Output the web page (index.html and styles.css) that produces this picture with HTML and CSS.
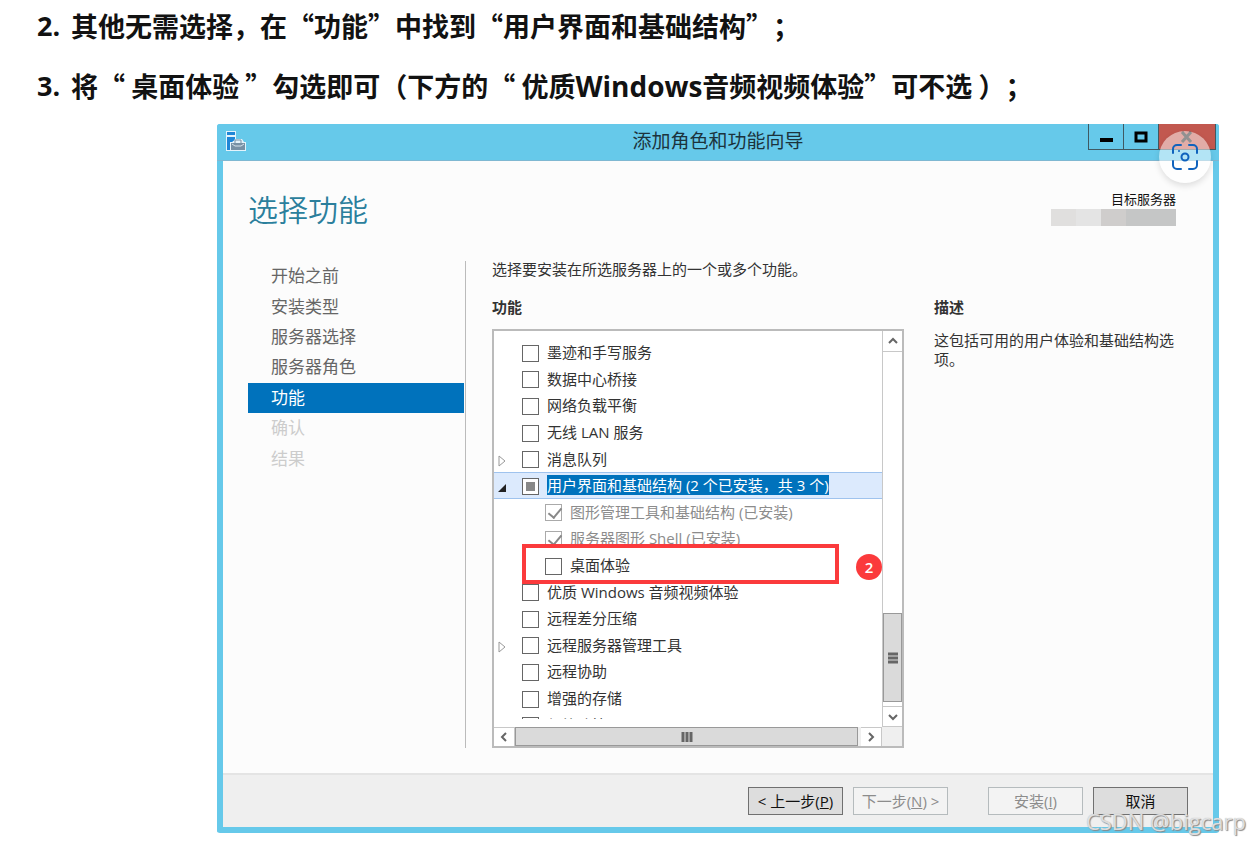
FILE: index.html
```html
<!DOCTYPE html>
<html lang="zh-CN">
<head>
    <meta charset="UTF-8">
    <meta name="viewport" content="width=device-width, initial-scale=1.0">
    <title>添加角色和功能向导</title>
    <link rel="stylesheet" href="styles.css">
</head>
<body>
<main class="article">
    <!-- 步骤说明 -->
    <h2 class="step"><span class="num">2.</span>其他无需选择，在“功能”中找到“用户界面和基础结构”；</h2>
    <h2 class="step"><span class="num">3.</span>将“ 桌面体验 ”勾选即可（下方的“ 优质<span class="en">Windows</span>音频视频体验”可不选 ）；</h2>

    <!-- 向导窗口 -->
    <section class="window">
        <header class="titlebar">
            <svg class="app-icon" width="22" height="22" viewBox="0 0 22 22">
                <path d="M1 1h10v8h6l2 3h2v9H1z" fill="#e4f3fb"/>
                <path d="M2 2h8v3H2zM2 7h8v3L7 12H5v8H2z" fill="#1f86d6"/>
                <path d="M5 12h3l2-3h6l2 3h3v9H5z" fill="#e4f3fb"/>
                <path d="M6 13h14v7H6z" fill="#7891a5"/>
                <path d="M10 13v-3h6v3" fill="none" stroke="#7891a5"/>
                <path d="M7 14l3 2h6l3-2" fill="none" stroke="#d5e3ec"/>
            </svg>
            <span class="title">添加角色和功能向导</span>
            <div class="controls">
                <button class="ctl min" aria-label="最小化"><svg width="14" height="14"><path d="M1 8h13v4H1z"/></svg></button>
                <button class="ctl max" aria-label="最大化"><svg width="14" height="14"><path d="M2 3h10v8H2z" fill="none" stroke="#000" stroke-width="3"/></svg></button>
                <button class="ctl close" aria-label="关闭"><svg width="14" height="14"><path d="M2 2l9 10M11 2l-9 10" stroke="#222" stroke-width="3"/></svg></button>
            </div>
            <button class="lens" aria-label="图像搜索">
                <svg width="28" height="28" viewBox="0 0 28 28" fill="none" stroke="#0f62bd" stroke-width="2" stroke-linecap="round">
                    <path d="M2 10V6a4 4 0 0 1 4-4h4M18 2h4a4 4 0 0 1 4 4v4M26 18v4a4 4 0 0 1-4 4h-4M10 26H6a4 4 0 0 1-4-4v-4"/>
                    <circle cx="14" cy="14" r="3.500"/>
                    <circle cx="8" cy="8" r="1" fill="#0f62bd" stroke="none"/>
                </svg>
            </button>
        </header>

        <div class="head">
            <h1>选择功能</h1>
            <div class="server">
                <span>目标服务器</span>
                <div class="mosaic"><i></i><i></i><i></i><i></i><i></i></div>
            </div>
        </div>

        <div class="content">
            <nav class="nav">
                <a href="#">开始之前</a>
                <a href="#">安装类型</a>
                <a href="#">服务器选择</a>
                <a href="#">服务器角色</a>
                <a href="#" class="active">功能</a>
                <a class="off">确认</a>
                <a class="off">结果</a>
            </nav>

            <div class="features">
                <p class="tip">选择要安装在所选服务器上的一个或多个功能。</p>
                <h3>功能</h3>
                <div class="listbox">
                    <div class="view">
                        <ul class="tree">
                            <li><span class="arrow"></span><label><input type="checkbox"><span>墨迹和手写服务</span></label></li>
                            <li><span class="arrow"></span><label><input type="checkbox"><span>数据中心桥接</span></label></li>
                            <li><span class="arrow"></span><label><input type="checkbox"><span>网络负载平衡</span></label></li>
                            <li><span class="arrow"></span><label><input type="checkbox"><span>无线 LAN 服务</span></label></li>
                            <li><span class="arrow"><svg width="9" height="14"><path d="M1 2l6 5-6 5z" fill="#fff" stroke="#999"/></svg></span><label><input type="checkbox"><span>消息队列</span></label></li>
                            <li class="selected"><span class="arrow"><svg width="9" height="14"><path d="M8 4v8H0z" fill="#222"/></svg></span><label><input type="checkbox" class="partial"><span>用户界面和基础结构 (2 个已安装，共 3 个)</span></label></li>
                            <li class="child"><label><input type="checkbox" checked disabled><span>图形管理工具和基础结构 (已安装)</span></label></li>
                            <li class="child"><label><input type="checkbox" checked disabled><span>服务器图形 Shell (已安装)</span></label></li>
                            <li class="child"><label><input type="checkbox"><span>桌面体验</span></label><b class="frame"></b><b class="badge">2</b></li>
                            <li><span class="arrow"></span><label><input type="checkbox"><span>优质 Windows 音频视频体验</span></label></li>
                            <li><span class="arrow"></span><label><input type="checkbox"><span>远程差分压缩</span></label></li>
                            <li><span class="arrow"><svg width="9" height="14"><path d="M1 2l6 5-6 5z" fill="#fff" stroke="#999"/></svg></span><label><input type="checkbox"><span>远程服务器管理工具</span></label></li>
                            <li><span class="arrow"></span><label><input type="checkbox"><span>远程协助</span></label></li>
                            <li><span class="arrow"></span><label><input type="checkbox"><span>增强的存储</span></label></li>
                            <li><span class="arrow"></span><label><input type="checkbox"><span>组策略管理</span></label></li>
                        </ul>
                    </div>
                    <div class="vbar">
                        <button aria-label="向上"><svg width="12" height="12"><path d="M2 8l4-4 4 4"/></svg></button>
                        <div class="thumb"><svg width="10" height="12"><path d="M0 2h10M0 6h10M0 10h10"/></svg></div>
                        <button aria-label="向下"><svg width="12" height="12"><path d="M2 4l4 4 4-4"/></svg></button>
                    </div>
                    <div class="hbar">
                        <button aria-label="向左"><svg width="12" height="12"><path d="M8 2L4 6l4 4"/></svg></button>
                        <div class="thumb"><svg width="12" height="10"><path d="M2 0v10M6 0v10M10 0v10"/></svg></div>
                        <button aria-label="向右"><svg width="12" height="12"><path d="M4 2l4 4-4 4"/></svg></button>
                    </div>
                </div>
            </div>

            <aside class="desc">
                <h3>描述</h3>
                <p>这包括可用的用户体验和基础结构选项。</p>
            </aside>
        </div>

        <footer class="buttons">
            <button class="btn">&lt; 上一步(<u>P</u>)</button>
            <button class="btn" disabled>下一步(<u>N</u>) &gt;</button>
            <button class="btn install" disabled>安装(<u>I</u>)</button>
            <button class="btn">取消</button>
        </footer>
    </section>
    <span class="watermark">CSDN @bigcarp</span>
</main>
</body>
</html>
```
FILE: styles.css
```css
* {
    box-sizing: border-box;
}
body {
    margin: 0;
    background: #fff;
    color: #333;
    font: 15px/20px "Open Sans", "Noto Sans CJK SC", sans-serif;
}
h1, h2, h3, p, ul {
    margin: 0;
    padding: 0;
}
button {
    padding: 0;
    font: inherit;
    color: inherit;
}
.article {
    position: relative;
    padding: 0 30px 7px 37px;
}

/* 步骤标题 */
.step {
    display: flex;
    height: 60px;
    padding-top: 6px;
    color: #121212;
    font: bold 27px/40px "Noto Sans CJK SC", sans-serif;
    text-spacing-trim: space-all;
    white-space: pre;
}
.num, .en {
    font-family: "Open Sans", sans-serif;
}
.num {
    width: 34px;
}
.en {
    font-size: 28px;
}

/* 窗口 */
.window {
    margin: 4px 0 0 180px;
    border: 6px solid #66c9ea;
    border-top: 0;
    border-radius: 3px;
    background: #fcfcfc;
}
.titlebar {
    position: relative;
    display: flex;
    justify-content: center;
    height: 37px;
    margin: 0 -6px;
    padding: 0 3px;
    border-bottom: 1px solid #7fb8d2;
    border-radius: 3px 3px 0 0;
    background: #66c9ea;
}
.app-icon {
    width: 22px;
    margin: 6px 0 0 5px;
}
.title {
    flex: 1;
    padding-left: 101px;
    color: #1c333c;
    font-size: 19px;
    line-height: 35px;
    text-align: center;
}
.controls {
    display: flex;
    height: 26px;
}
.ctl {
    display: grid;
    place-items: center;
    width: 35px;
    border: 1px solid #3f5962;
    border-width: 0 0 1px 1px;
    background: #66c9ea;
}
.close {
    width: 58px;
    border-right-width: 1px;
    background: #c2584f;
}
.lens {
    position: absolute;
    top: 7px;
    right: 8px;
    display: grid;
    place-items: center;
    width: 52px;
    height: 52px;
    border: 0;
    border-radius: 50%;
    background: rgba(255, 255, 255, .5);
    box-shadow: 0 3px 6px rgba(0, 0, 0, .12);
}
.head {
    display: flex;
    justify-content: space-between;
    height: 100px;
    padding: 28px 37px 0 25px;
}
h1 {
    color: #2b7f9c;
    font-size: 30px;
    font-weight: 350;
    line-height: 42px;
}
.server {
    color: #111;
    font-size: 13px;
    text-align: right;
}
.mosaic {
    display: flex;
    height: 17px;
}
.mosaic i {
    width: 25px;
    background: #c5c6c6;
}
.mosaic i:nth-child(1) {
    background: #e0dfde;
}
.mosaic i:nth-child(2) {
    background: #e4e4e4;
}
.mosaic i:nth-child(3) {
    background: #cfcdcc;
}
.content {
    display: grid;
    grid-template-columns: 218px 1fr 252px;
    column-gap: 26px;
    padding: 0 31px 25px 25px;
}

/* 左侧导航 */
.nav {
    display: grid;
    grid-template-rows: repeat(7, 1fr);
    border-right: 1px solid #bbb;
    padding: 0 1px 274px 0;
}
.nav a {
    display: flex;
    align-items: center;
    padding-left: 23px;
    color: #666;
    font-size: 17px;
    text-decoration: none;
}
.nav .active {
    background: #0072bc;
    color: #fff;
}
.nav .off {
    color: #ccc;
}

/* 功能列表 */
h3 {
    font-size: 15px;
    line-height: 20px;
}
.tip {
    line-height: 16px;
}
.features h3 {
    margin: 20px 0 12px;
}
.listbox {
    display: grid;
    grid-template: 396px 19px / 1fr 20px;
    border: 2px solid #bbb;
    background: #fff;
}
.view {
    height: 388px;
    padding-top: 8px;
    overflow: hidden;
}
.tree {
    display: grid;
    grid-template-rows: repeat(15, 1fr);
    height: 399px;
    list-style: none;
}
.tree li {
    position: relative;
    display: flex;
    align-items: center;
    min-height: 0;
}
.arrow {
    width: 28px;
    padding: 4px 0 0 4px;
    line-height: 0;
}
.tree label {
    display: flex;
    align-items: center;
    gap: 8px;
    white-space: nowrap;
}
.tree .child {
    padding-left: 51px;
}
.tree input {
    appearance: none;
    width: 17px;
    height: 17px;
    margin: 2px 0 0;
    border: 1px solid #666;
    background: #fff;
}
.tree .partial {
    background: #888;
    box-shadow: inset 0 0 0 3px #fff;
}
.tree input:disabled {
    border-color: #aaa;
}
.tree input:disabled::after {
    content: "";
    display: block;
    width: 6px;
    height: 11px;
    margin-left: 5px;
    border: solid #888;
    border-width: 0 2px 2px 0;
    transform: rotate(40deg);
}
.tree input:disabled + span {
    color: #8c8c8c;
}
.selected {
    border: solid #9fc3ee;
    border-width: 1px 0;
    background: #dceafd;
}
.selected label span {
    background: #0072bc;
    color: #fff;
}
.frame {
    position: absolute;
    z-index: 1;
    left: 28px;
    top: -8px;
    width: 317px;
    height: 40px;
    border: 4px solid #fb3a3c;
}
.badge {
    position: absolute;
    left: 362px;
    top: 2px;
    width: 26px;
    height: 26px;
    border-radius: 50%;
    background: #fb3a3c;
    color: #fff;
    font-weight: 600;
    line-height: 26px;
    text-align: center;
}

/* 滚动条 */
.vbar, .hbar {
    display: flex;
    background: #fff;
}
.vbar {
    flex-direction: column;
    border-left: 1px solid #c8c8c8;
}
.hbar {
    grid-column: 1 / 3;
    padding-right: 20px;
    background: #efefef;
}
.listbox button {
    display: grid;
    place-items: center;
    flex: none;
    width: 21px;
    height: 19px;
    border: solid #c8c8c8;
    border-width: 1px 1px 0 0;
    background: #fff;
}
.vbar button {
    width: 19px;
    height: 21px;
    border-width: 0 0 1px;
}
.vbar button:last-child {
    border-width: 1px 0;
}
.listbox button svg {
    fill: none;
    stroke: #666;
    stroke-width: 2;
}
.thumb {
    display: grid;
    place-items: center;
    border: 1px solid #999;
    background: #dadada;
}
.thumb svg {
    stroke: #666;
    stroke-width: 3;
}
.vbar .thumb {
    height: 89px;
    margin: auto 0 4px;
}
.hbar .thumb {
    flex: 1;
    margin-right: 3px;
}

.desc {
    padding: 36px 0 0 4px;
}
.desc p {
    margin-top: 14px;
    line-height: 19px;
}

/* 底部按钮 */
.buttons {
    display: flex;
    justify-content: flex-end;
    gap: 10px;
    padding: 12px 25px;
    border-top: 2px solid #e4e4e4;
    background: #efefef;
}
.btn {
    width: 95px;
    height: 28px;
    border: 1px solid #707070;
    background: #ddd;
    color: #111;
    white-space: nowrap;
}
.btn:disabled {
    border-color: #b5bbbd;
    background: #f3f3f3;
    color: #8c8c8c;
}
.install {
    margin-left: 30px;
}
.watermark {
    position: absolute;
    right: 3px;
    bottom: 4px;
    color: rgba(240, 240, 240, .8);
    font-size: 22px;
    line-height: 30px;
    text-shadow: 1px 1px 1px #888, 0 0 1px #aaa;
}
```
